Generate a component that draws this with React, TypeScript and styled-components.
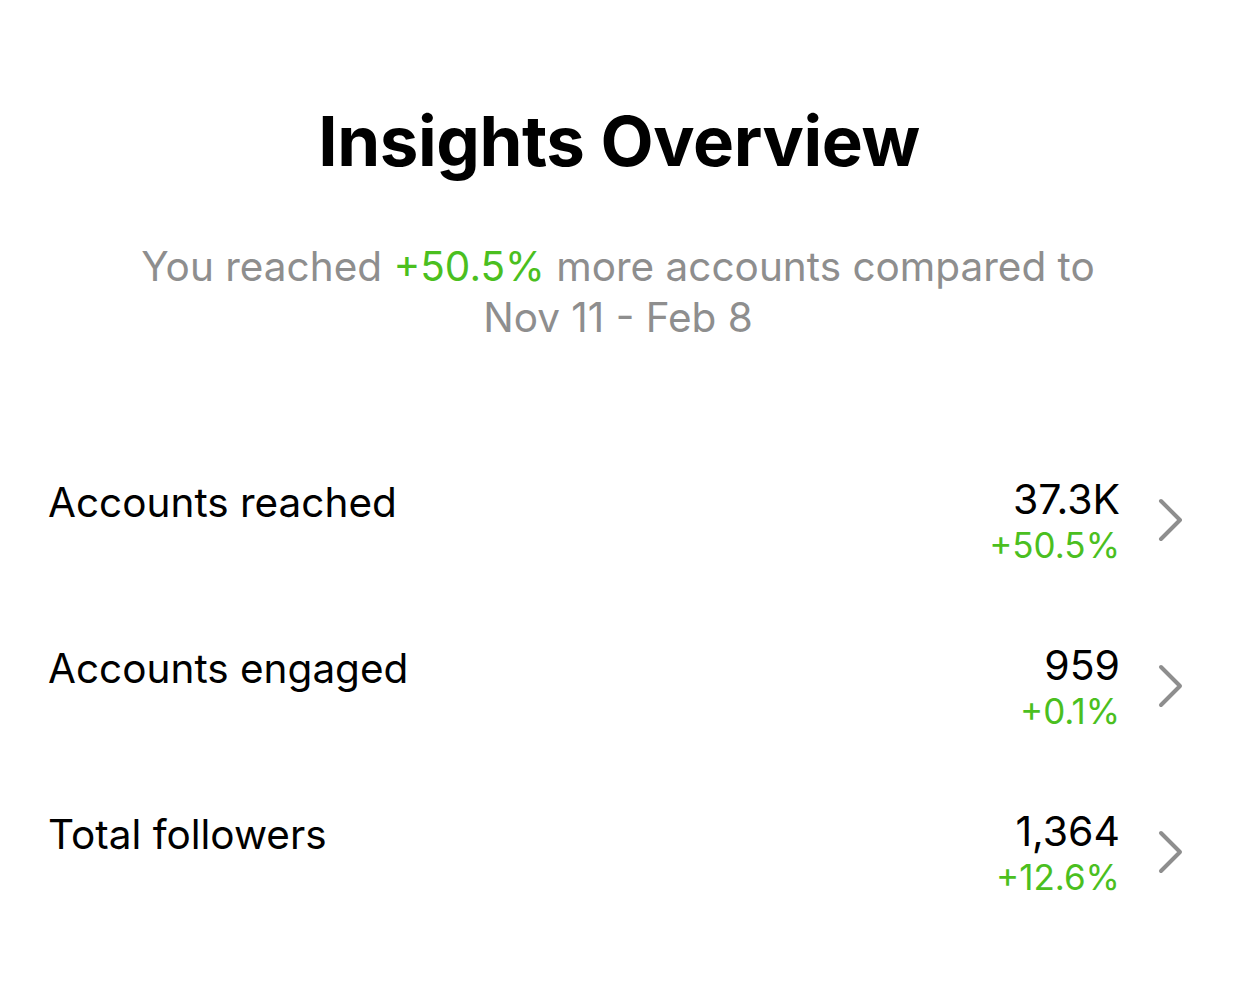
import React from 'react';
import styled, { createGlobalStyle } from 'styled-components';

const GlobalStyle = createGlobalStyle`
  html, body {
    margin: 0;
    padding: 0;
    background: #ffffff;
  }
  body {
    font-family: Inter, "Noto Sans", sans-serif;
    color: #000000;
    -webkit-font-smoothing: antialiased;
  }
`;

const Page = styled.div`
  width: 1242px;
  height: 981px;
  box-sizing: border-box;
  padding: 101px 58px 0 48px;
  display: flex;
  flex-direction: column;
`;

const Title = styled.h1`
  margin: 0;
  text-align: center;
  font-size: 69px;
  font-weight: 700;
  letter-spacing: -0.4px;
  line-height: 80px;
  padding-left: 6px;
`;

const Summary = styled.p`
  margin: 60px 0 0;
  text-align: center;
  font-size: 40.5px;
  line-height: 51px;
  color: #8e8e8e;
  padding-left: 4px;
`;

const Green = styled.span`
  color: #4bbf1f;
`;

const List = styled.div`
  margin-top: 132px;
  display: flex;
  flex-direction: column;
  gap: 66px;
`;

const Row = styled.div`
  display: flex;
  align-items: flex-start;
  height: 100px;
`;

const Label = styled.div`
  flex: 1;
  font-size: 40.5px;
  line-height: 50px;
  padding-top: 3px;
`;

const Values = styled.div`
  display: flex;
  flex-direction: column;
  align-items: flex-end;
`;

const Count = styled.div`
  font-size: 41px;
  line-height: 48px;
`;

const Change = styled.div`
  font-size: 35px;
  line-height: 44px;
  color: #4bbf1f;
`;

const Chevron = styled.svg`
  width: 26px;
  height: 44px;
  margin-left: 38px;
  margin-top: 23px;
  flex-shrink: 0;
`;

const rows = [
  { label: 'Accounts reached', value: '37.3K', change: '+50.5%' },
  { label: 'Accounts engaged', value: '959', change: '+0.1%' },
  { label: 'Total followers', value: '1,364', change: '+12.6%' },
];

export default function App() {
  return (
    <>
      <GlobalStyle />
      <Page>
        <Title>Insights Overview</Title>
        <Summary>
          You reached <Green>+50.5%</Green> more accounts compared to
          <br />
          Nov 11 - Feb 8
        </Summary>
        <List>
          {rows.map((r) => (
            <Row key={r.label}>
              <Label>{r.label}</Label>
              <Values>
                <Count>{r.value}</Count>
                <Change>{r.change}</Change>
              </Values>
              <Chevron viewBox="0 0 26 44">
                <path
                  d="M3 3 L22 22 L3 41"
                  fill="none"
                  stroke="#8e8e8e"
                  strokeWidth="4"
                  strokeLinecap="round"
                  strokeLinejoin="round"
                />
              </Chevron>
            </Row>
          ))}
        </List>
      </Page>
    </>
  );
}
